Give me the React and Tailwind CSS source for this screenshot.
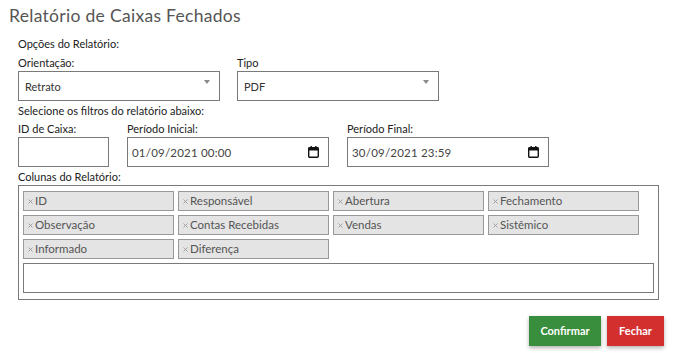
import { X } from 'lucide-react';

const colunas = [
  'ID', 'Responsável', 'Abertura', 'Fechamento',
  'Observação', 'Contas Recebidas', 'Vendas', 'Sistêmico',
  'Informado', 'Diferença',
];

function Select({ value }) {
  return (
    <div className="w-[202px] h-[30px] border border-[#7a7a7a] flex items-center pl-[6px] pr-[9px] text-[11px] text-[#333]">
      <span className="mt-[3px]">{value}</span>
      <svg width="6" height="4" viewBox="0 0 6 4" className="ml-auto -mt-[8px]">
        <path d="M0 0 L6 0 L3 4 Z" fill="#8a8a8a" />
      </svg>
    </div>
  );
}

function DateField({ value }) {
  return (
    <div className="w-[202px] h-[30px] border border-[#7a7a7a] flex items-center pl-[4px] pr-[9px] text-[11.5px] text-[#444]">
      <span className="mt-[1px] tracking-[0.2px]">{value}</span>
      <svg width="11" height="12" viewBox="0 0 11 12" className="ml-auto">
        <rect x="0.7" y="1.7" width="9.6" height="9.6" rx="1" fill="none" stroke="#111" strokeWidth="1.4" />
        <rect x="0.5" y="1.5" width="10" height="3" fill="#111" />
        <rect x="2.5" y="0" width="1.4" height="2.5" fill="#111" />
        <rect x="7.1" y="0" width="1.4" height="2.5" fill="#111" />
      </svg>
    </div>
  );
}

function Label({ children, className = '' }) {
  return <div className={`h-[16px] leading-[16px] text-[11px] text-[#222] ${className}`}>{children}</div>;
}

export default function App() {
  return (
    <div className="w-[673px] h-[353px] bg-white font-['Lato','Liberation_Sans',sans-serif] overflow-hidden">
      <h1 className="pl-[9px] pt-[4px] h-[36px] text-[17.5px] leading-[24px] text-[#555] tracking-[0.3px]">
        Relatório de Caixas Fechados
      </h1>

      <div className="pl-[18px]">
        <Label>Opções do Relatório:</Label>
        <div className="flex gap-[17px] mt-[3px]">
          <div>
            <Label>Orientação:</Label>
            <Select value="Retrato" />
          </div>
          <div>
            <Label>Tipo</Label>
            <Select value="PDF" />
          </div>
        </div>

        <Label className="mt-[2px]">Selecione os filtros do relatório abaixo:</Label>
        <div className="flex gap-[18px] mt-[2px]">
          <div>
            <Label>ID de Caixa:</Label>
            <div className="w-[91px] h-[30px] border border-[#7a7a7a]" />
          </div>
          <div>
            <Label>Período Inicial:</Label>
            <DateField value="01/09/2021 00:00" />
          </div>
          <div>
            <Label>Período Final:</Label>
            <DateField value="30/09/2021 23:59" />
          </div>
        </div>

        <Label className="mt-[2px]">Colunas do Relatório:</Label>
        <div className="w-[641px] h-[115px] border border-[#7a7a7a] px-[4px] pt-[5px]">
          <div className="grid grid-cols-[151px_151px_151px_151px] gap-x-[4px] gap-y-[4px]">
            {colunas.map((c) => (
              <div key={c} className="h-[20px] bg-[#e4e4e4] border border-[#999] flex items-center pl-[3px] text-[11.5px] text-[#555]">
                <X size={7} strokeWidth={3} className="text-[#999] mr-[1px] mt-[1px]" />
                <span>{c}</span>
              </div>
            ))}
          </div>
          <div className="mt-[4px] h-[30px] border border-[#7a7a7a]" />
        </div>
      </div>

      <div className="flex justify-end gap-[6px] pr-[9px] mt-[16px]">
        <button className="w-[72px] h-[30px] bg-[#388e3c] text-white text-[11px] font-bold shadow-[0_2px_4px_rgba(0,0,0,0.3)]">
          Confirmar
        </button>
        <button className="w-[57px] h-[30px] bg-[#d32f2f] text-white text-[11px] font-bold shadow-[0_2px_4px_rgba(0,0,0,0.3)]">
          Fechar
        </button>
      </div>
    </div>
  );
}
